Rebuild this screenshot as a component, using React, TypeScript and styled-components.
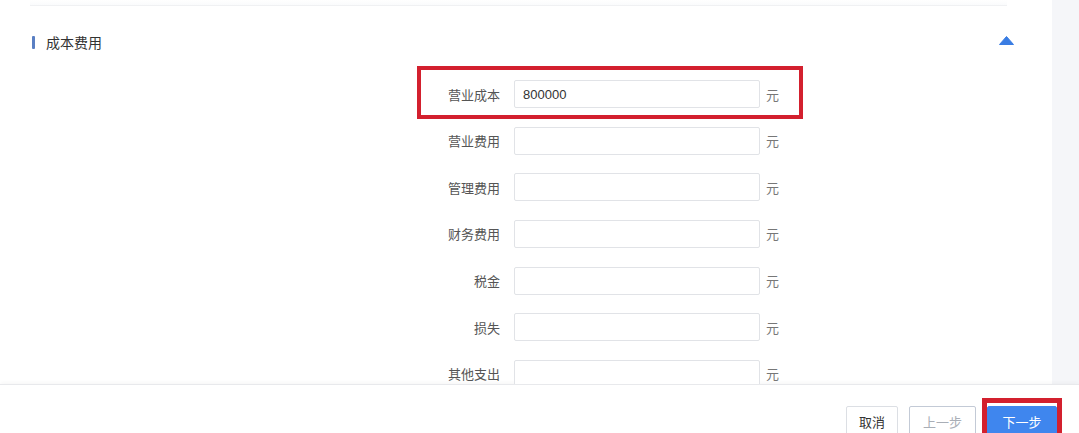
import React from "react";
import styled, { createGlobalStyle, css } from "styled-components";

const GlobalStyle = createGlobalStyle`
  html, body {
    margin: 0;
    padding: 0;
    background: #ffffff;
    font-family: "Liberation Sans", "Noto Sans CJK SC", sans-serif;
    color: #333;
  }
  * { box-sizing: border-box; }
`;

const Page = styled.div`
  width: 1079px;
  height: 433px;
  display: flex;
  flex-direction: column;
  overflow: hidden;
`;

const Body = styled.div`
  display: flex;
  flex-shrink: 0;
  height: 384px;
  overflow: hidden;
`;

const Content = styled.div`
  flex: 1;
  background: #fff;
  overflow: hidden;
`;

const ScrollTrack = styled.div`
  width: 27px;
  background: #f5f6f9;
`;

const TopDivider = styled.div`
  height: 6px;
  margin: 0 45px 0 30px;
  border-bottom: 1px solid #f0f1f3;
  background: linear-gradient(#fff, #fafbfc);
`;

const SectionHeader = styled.div`
  display: flex;
  align-items: center;
  justify-content: space-between;
  height: 20px;
  margin-top: 26px;
  padding: 0 38px 0 32px;
`;

const SectionTitle = styled.div`
  display: flex;
  align-items: center;
  font-size: 14px;
  color: #333;

  &::before {
    content: "";
    width: 3px;
    height: 13px;
    border-radius: 1px;
    background: #5a7fc3;
    margin-right: 11px;
  }
`;

const Caret = styled.svg`
  width: 15px;
  height: 9px;
  display: block;
  margin-top: -3px;
`;

const FormList = styled.div`
  display: flex;
  flex-direction: column;
  align-items: flex-start;
  gap: 18.67px;
  margin: 28px 0 0 410px;
`;

const Row = styled.div<{ $highlight?: boolean }>`
  position: relative;
  display: flex;
  align-items: center;
  height: 28px;

  ${(p) =>
    p.$highlight &&
    css`
      &::after {
        content: "";
        position: absolute;
        left: 7px;
        right: -24px;
        top: -14px;
        bottom: -11px;
        border: 4px solid #d3202e;
        pointer-events: none;
      }
    `}
`;

const Label = styled.label`
  width: 104px;
  padding-right: 14px;
  text-align: right;
  font-size: 13px;
  color: #555;
`;

const Input = styled.input`
  width: 246px;
  height: 28px;
  border: 1px solid #e1e3e7;
  border-radius: 2px;
  padding: 0 8px;
  font-family: "Liberation Sans", "Noto Sans CJK SC", sans-serif;
  font-size: 13px;
  color: #333;
  background: #fff;
  outline: none;
`;

const Unit = styled.span`
  margin-left: 6px;
  font-size: 13px;
  color: #777;
`;

const Footer = styled.div`
  flex: 1;
  display: flex;
  justify-content: flex-end;
  align-items: flex-start;
  gap: 11px;
  padding: 21px 22px 0 0;
  border-top: 1px solid #e8e9ec;
  box-shadow: 0 -2px 4px rgba(0, 0, 0, 0.03);
  background: #fff;
  overflow: hidden;
`;

const Button = styled.button<{ $variant?: "default" | "ghost" | "primary"; $w: number }>`
  flex-shrink: 0;
  width: ${(p) => p.$w}px;
  height: 30px;
  padding: 0;
  border-radius: 2px;
  font-family: "Liberation Sans", "Noto Sans CJK SC", sans-serif;
  font-size: 13px;
  cursor: pointer;
  border: 1px solid #dcdfe4;
  background: #fff;
  color: #333;

  ${(p) =>
    p.$variant === "ghost" &&
    css`
      border-color: #c3cad6;
      color: #a9aeb6;
    `}
  ${(p) =>
    p.$variant === "primary" &&
    css`
      border-color: #3f86ee;
      background: #3f86ee;
      color: #fff;
    `}
`;

const Marked = styled.div`
  position: relative;
  flex-shrink: 0;

  &::after {
    content: "";
    position: absolute;
    left: -5px;
    right: -5px;
    top: -8px;
    bottom: -8px;
    border: 5px solid #d3202e;
    pointer-events: none;
  }
`;

const fields = [
  { label: "营业成本", value: "800000", highlight: true },
  { label: "营业费用", value: "" },
  { label: "管理费用", value: "" },
  { label: "财务费用", value: "" },
  { label: "税金", value: "" },
  { label: "损失", value: "" },
  { label: "其他支出", value: "" },
];

export default function App() {
  return (
    <>
      <GlobalStyle />
      <Page>
        <Body>
          <Content>
            <TopDivider />
            <SectionHeader>
              <SectionTitle>成本费用</SectionTitle>
              <Caret viewBox="0 0 15 9">
                <path d="M7.5 0.5 L14.5 8.5 L0.5 8.5 Z" fill="#3a7de3" strokeLinejoin="round" stroke="#3a7de3" strokeWidth="1" />
              </Caret>
            </SectionHeader>
            <FormList>
              {fields.map((f) => (
                <Row key={f.label} $highlight={f.highlight}>
                  <Label>{f.label}</Label>
                  <Input defaultValue={f.value} />
                  <Unit>元</Unit>
                </Row>
              ))}
            </FormList>
          </Content>
          <ScrollTrack />
        </Body>
        <Footer>
          <Button $w={52}>取消</Button>
          <Button $variant="ghost" $w={67}>上一步</Button>
          <Marked>
            <Button $variant="primary" $w={70}>下一步</Button>
          </Marked>
        </Footer>
      </Page>
    </>
  );
}
